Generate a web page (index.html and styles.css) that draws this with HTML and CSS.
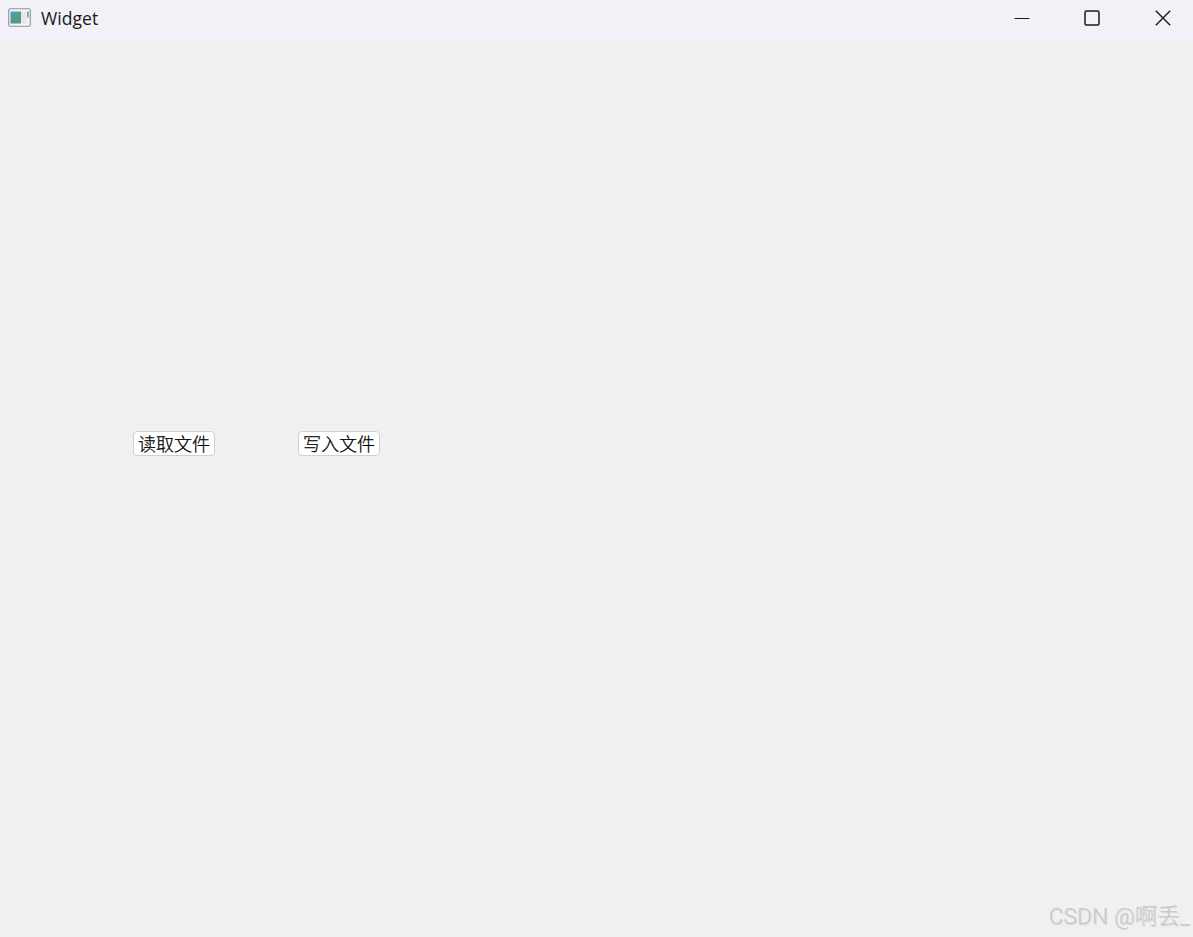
FILE: index.html
```html
<!DOCTYPE html>
<html lang="zh">
<head>
<meta charset="utf-8">
<title>Widget</title>
<link rel="stylesheet" href="styles.css">
</head>
<body>
<div class="window">
  <header class="titlebar">
    <svg class="app-icon" width="24" height="20" viewBox="0 0 24 20">
      <defs>
        <linearGradient id="g" x1="0" y1="0" x2="0.6" y2="1">
          <stop offset="0" stop-color="#5a9cc0"/>
          <stop offset="1" stop-color="#4f9a78"/>
        </linearGradient>
      </defs>
      <rect x="0.75" y="0.75" width="21.5" height="17.5" rx="1.5" fill="#f4f4f6" stroke="#8b919a" stroke-width="1.1"/>
      <rect x="2.5" y="3.5" width="10.5" height="12" fill="url(#g)"/>
      <rect x="13" y="3.5" width="5.5" height="12" fill="#e4e7e6"/>
      <rect x="19" y="3.5" width="1.8" height="6" fill="#7fa89a"/>
    </svg>
    <span class="title">Widget</span>
    <div class="controls">
      <svg class="ctl ctl-min" width="16" height="16" viewBox="0 0 16 16"><path d="M0.5 8.5H15.5" stroke="#1a1a1a" stroke-width="1" fill="none"/></svg>
      <svg class="ctl ctl-max" width="16" height="16" viewBox="0 0 16 16"><rect x="1" y="1" width="14" height="14" rx="1.5" stroke="#1a1a1a" stroke-width="1.5" fill="none"/></svg>
      <svg class="ctl ctl-close" width="16" height="16" viewBox="0 0 16 16"><path d="M0.8 0.8L15.2 15.2M15.2 0.8L0.8 15.2" stroke="#1a1a1a" stroke-width="1.4" fill="none"/></svg>
    </div>
  </header>
  <main class="client">
    <div class="buttons">
      <button class="btn" type="button">读取文件</button>
      <button class="btn" type="button">写入文件</button>
    </div>
    <div class="watermark">CSDN @啊丢_</div>
  </main>
</div>
</body>
</html>
```
FILE: styles.css
```css
html, body {
  margin: 0;
  padding: 0;
  height: 100%;
  overflow: hidden;
}
.window {
  height: 937px;
  display: flex;
  flex-direction: column;
  background: #f0f0f0;
  font-family: "Noto Sans CJK SC", "Liberation Sans", sans-serif;
}
.titlebar {
  height: 40px;
  flex: none;
  display: flex;
  align-items: center;
  background: #f2f1f8;
  padding-left: 8px;
  box-sizing: border-box;
}
.app-icon {
  flex: none;
  margin-top: -5px;
}
.title {
  margin-left: 9px;
  margin-top: -5px;
  font-family: "Open Sans", "Noto Sans", sans-serif;
  font-size: 17.6px;
  color: #1a1a1a;
}
.controls {
  margin-left: auto;
  display: flex;
  align-items: center;
  margin-top: -5px;
  padding-right: 22px;
}
.ctl-min { margin-right: 54px; }
.ctl-max { margin-right: 55px; }
.client {
  flex: 1;
  position: relative;
  display: flex;
  flex-direction: column;
}
.buttons {
  display: flex;
  gap: 83px;
  margin-top: 391px;
  margin-left: 133px;
}
.btn {
  width: 82px;
  height: 25px;
  padding: 0;
  box-sizing: border-box;
  border: 1px solid #d0d0d0;
  border-radius: 4px;
  background: #fff;
  font-family: "Noto Sans CJK SC", sans-serif;
  font-size: 18px;
  font-weight: 300;
  line-height: 23px;
  color: #000;
  -webkit-text-stroke: 0.25px #000;
  overflow: hidden;
}
.watermark {
  position: absolute;
  right: 3px;
  bottom: 8px;
  font-family: "Roboto", "Noto Sans CJK SC", sans-serif;
  font-size: 22.5px;
  font-weight: 300;
  letter-spacing: 0.2px;
  line-height: 26px;
  color: #c8c8c8;
  text-shadow: 1px 1px 1px rgba(0, 0, 0, 0.12);
  white-space: nowrap;
}
```
